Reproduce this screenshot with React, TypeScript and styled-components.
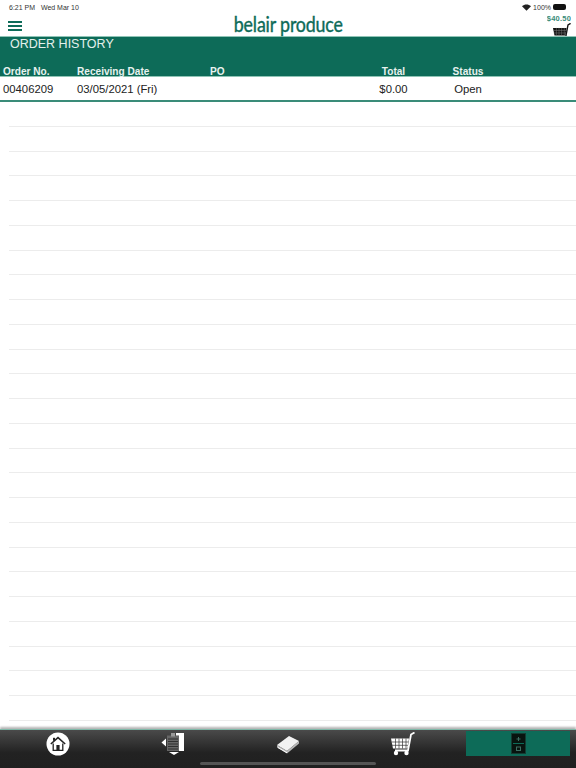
import styled, { createGlobalStyle } from "styled-components";

const GREEN = "#0d6b58";

const GlobalStyle = createGlobalStyle`
  html, body {
    margin: 0;
    padding: 0;
    background: #ffffff;
  }
  #root {
    height: 768px;
  }
`;

const columns = [
  { label: "Order No.", value: "00406209", width: 74 },
  { label: "Receiving Date", value: "03/05/2021 (Fri)", width: 133 },
  { label: "PO", value: "", width: 150 },
  { label: "Total", value: "$0.00", width: 67, center: true },
  { label: "Status", value: "Open", width: 82, center: true },
];

const HomeIcon = () => (
  <svg width="24" height="24" viewBox="0 0 24 24">
    <circle cx="12" cy="12" r="11.5" fill="#fff" />
    <path d="M4.800 12 12 5.600l7.200 6.400" fill="none" stroke="#222" strokeWidth="1.500" />
    <rect x="7" y="5.800" width="2" height="3" fill="#222" />
    <path d="M7.200 11.500v6.800h9.600v-6.800" fill="none" stroke="#222" strokeWidth="1.300" />
    <rect x="10.400" y="13" width="3.200" height="5.300" fill="#222" />
  </svg>
);

const OrdersIcon = () => (
  <svg width="24" height="24" viewBox="0 0 24 24">
    <path d="M0.500 10.500 5 6.500v8z" fill="#fff" />
    <path d="M8 20h10l-5 3z" fill="#fff" />
    <rect x="6" y="3.500" width="12" height="15.500" fill="#666" />
    <rect x="10" y="1" width="4" height="3.500" fill="#999" />
    <path d="M7 7h10M7 9.500h10M7 12h10M7 14.500h10M7 17h10" stroke="#222" strokeWidth="0.800" />
    <path d="M15 1h8v18h-5V3.500h-3z" fill="#fff" />
  </svg>
);

const BookIcon = () => (
  <svg width="24" height="20" viewBox="0 0 24 20">
    <path d="M1 11 13 2l10 5-12 10z" fill="#f2f2f2" />
    <path d="M1 11v2.500l10 6 12-10V7L11 17z" fill="#b9b9b9" />
    <path d="M2 13.500l9 5.300" stroke="#fff" strokeWidth="1" />
  </svg>
);

const CartIcon = ({ color, line, size }: { color: string; line: string; size: number }) => (
  <svg width={size} height={size} viewBox="0 0 24 24">
    <path d="M0 6.500h18l-1.500 10H2z" fill={color} />
    <path
      d="M0.500 10h17.500M1 13.300h16.500M4.500 6.500v10M8 6.500v10M11.500 6.500v10M15 6.500v10"
      stroke={line}
      strokeWidth="0.700"
    />
    <path d="M23.500 0.500 20 2.500l-3 16H4" fill="none" stroke={color} strokeWidth="1.800" />
    <circle cx="5" cy="21" r="2.200" fill={color} />
    <circle cx="15.500" cy="21" r="2.200" fill={color} />
  </svg>
);

const DrawerIcon = () => (
  <svg width="15" height="21" viewBox="0 0 15 21">
    <rect x="0.500" y="0.500" width="14" height="20" fill="#08140f" stroke="#143b32" />
    <rect x="2" y="10" width="11" height="1" fill="#0d6b58" />
    <path d="M5.500 6h4M7.500 4v4" stroke="#3e6f63" strokeWidth="1" />
    <rect x="5.500" y="14" width="4" height="3.500" fill="none" stroke="#3e6f63" />
  </svg>
);

export default function App() {
  const blankRows = Array.from({ length: 25 }, (_, i) => i);

  return (
    <PageStyled>
      <GlobalStyle />
      <TopStyled>
        <StatusBarStyled>
          <StatusTextStyled>6:21 PM&nbsp;&nbsp; Wed Mar 10</StatusTextStyled>
          <StatusRightStyled>
            <svg width="9" height="7" viewBox="0 0 11 8">
              <path d="M0 2.500C3 -0.500 8 -0.500 11 2.500L5.500 8z" fill="#222" />
            </svg>
            <StatusTextStyled>100%</StatusTextStyled>
            <BatteryStyled />
          </StatusRightStyled>
        </StatusBarStyled>
        <BrandRowStyled>
          <BurgerStyled>
            <span />
            <span />
            <span />
          </BurgerStyled>
          <LogoStyled>belair produce</LogoStyled>
          <CartBoxStyled>
            <PriceStyled>$40.50</PriceStyled>
            <CartIcon color="#111111" line="#777777" size={18} />
          </CartBoxStyled>
        </BrandRowStyled>
      </TopStyled>

      <BandStyled>
        <TitleStyled>ORDER HISTORY</TitleStyled>
        <ColumnsStyled>
          {columns.map((c) => (
            <HeadCellStyled key={c.label} $width={c.width} $center={c.center}>
              {c.label}
            </HeadCellStyled>
          ))}
        </ColumnsStyled>
      </BandStyled>

      <OrderRowStyled>
        {columns.map((c) => (
          <ValueCellStyled key={c.label} $width={c.width} $center={c.center}>
            {c.value}
          </ValueCellStyled>
        ))}
      </OrderRowStyled>

      <ListStyled>
        {blankRows.map((i) => (
          <BlankRowStyled key={i} />
        ))}
      </ListStyled>

      <TabBarStyled>
        <TabStyled $width={115}>
          <HomeIcon />
        </TabStyled>
        <TabStyled $width={115}>
          <OrdersIcon />
        </TabStyled>
        <TabStyled $width={115}>
          <BookIcon />
        </TabStyled>
        <TabStyled $width={115}>
          <CartIcon color="#ffffff" line="#333333" size={24} />
        </TabStyled>
        <ActiveTabStyled>
          <DrawerIcon />
        </ActiveTabStyled>
        <HomeIndicatorStyled />
      </TabBarStyled>
    </PageStyled>
  );
}

const PageStyled = styled.div`
  display: flex;
  flex-direction: column;
  width: 576px;
  height: 768px;
  overflow: hidden;
  background: #ffffff;
  font-family: "Liberation Sans", Arial, sans-serif;
`;

const TopStyled = styled.header`
  flex: 0 0 36px;
  height: 36px;
  display: flex;
  flex-direction: column;
`;

const StatusBarStyled = styled.div`
  height: 14px;
  padding: 0 9px 0 9px;
  display: flex;
  align-items: center;
  justify-content: space-between;
`;

const StatusTextStyled = styled.span`
  font-size: 7px;
  color: #333333;
`;

const StatusRightStyled = styled.div`
  display: flex;
  align-items: center;
  gap: 2px;
`;

const BatteryStyled = styled.span`
  width: 13px;
  height: 6px;
  border-radius: 2px;
  background: #111111;
  margin-right: 1px;
`;

const BrandRowStyled = styled.div`
  position: relative;
  height: 22px;
  display: flex;
  align-items: flex-end;
  justify-content: center;
`;

const BurgerStyled = styled.div`
  position: absolute;
  left: 8px;
  top: 7px;
  width: 14px;
  display: flex;
  flex-direction: column;
  gap: 2.500px;
  span {
    display: block;
    height: 1.500px;
    background: ${GREEN};
  }
`;

const LogoStyled = styled.div`
  font-family: "Lato", sans-serif;
  font-size: 22px;
  line-height: 24px;
  letter-spacing: -0.200px;
  color: ${GREEN};
  white-space: nowrap;
  transform: scaleX(0.81);
  -webkit-text-stroke: 0.400px ${GREEN};
  margin-left: 1px;
`;

const CartBoxStyled = styled.div`
  position: absolute;
  right: 5px;
  top: 0;
  height: 22px;
  overflow: hidden;
  display: flex;
  flex-direction: column;
  align-items: flex-end;
  svg {
    flex: none;
  }
`;

const PriceStyled = styled.div`
  font-size: 7.500px;
  font-weight: bold;
  line-height: 9px;
  letter-spacing: 0.200px;
  color: #3a8c79;
`;

const BandStyled = styled.div`
  flex: 0 0 41px;
  height: 41px;
  box-sizing: border-box;
  display: flex;
  flex-direction: column;
  background: ${GREEN};
  border-top: 1px solid #8fc4b6;
  border-bottom: 1px solid #8fc4b6;
`;

const TitleStyled = styled.div`
  padding: 0 0 0 10px;
  font-size: 12.500px;
  line-height: 14px;
  color: #e4f0ec;
`;

const ColumnsStyled = styled.div`
  margin-top: auto;
  margin-bottom: -1px;
  display: flex;
  height: 11px;
  padding-left: 3px;
`;

const HeadCellStyled = styled.div<{ $width: number; $center?: boolean }>`
  width: ${(p) => p.$width}px;
  font-size: 10.100px;
  font-weight: bold;
  line-height: 11px;
  white-space: nowrap;
  color: #e8f2ef;
  text-align: ${(p) => (p.$center ? "center" : "left")};
`;

const OrderRowStyled = styled.div`
  flex: 0 0 23px;
  height: 23px;
  box-sizing: content-box;
  display: flex;
  align-items: center;
  padding-left: 3px;
  border-bottom: 2px solid #3a8c79;
`;

const ValueCellStyled = styled.div<{ $width: number; $center?: boolean }>`
  width: ${(p) => p.$width}px;
  font-size: 11.300px;
  white-space: nowrap;
  color: #222222;
  text-align: ${(p) => (p.$center ? "center" : "left")};
`;

const ListStyled = styled.div`
  flex: 1;
  min-height: 0;
  overflow: hidden;
  padding-left: 9px;
  display: flex;
  flex-direction: column;
`;

const BlankRowStyled = styled.div`
  flex: 0 0 24.750px;
  box-sizing: border-box;
  border-bottom: 1px solid #ececec;
`;

const TabBarStyled = styled.nav`
  position: relative;
  height: 39px;
  flex: 0 0 39px;
  display: flex;
  box-sizing: border-box;
  border-top: 1px solid #7fb8a8;
  background: linear-gradient(#4a4a4a 0%, #333333 35%, #222222 60%, #202020 100%);
  box-shadow: 0 -2px 2px #b5b5b5;
`;

const TabStyled = styled.div<{ $width: number }>`
  width: ${(p) => p.$width}px;
  height: 26px;
  padding-top: 1px;
  display: flex;
  align-items: center;
  justify-content: center;
`;

const ActiveTabStyled = styled.div`
  width: 104px;
  height: 25px;
  margin: 1px 0 0 6px;
  display: flex;
  align-items: center;
  justify-content: center;
  background: ${GREEN};
`;

const HomeIndicatorStyled = styled.span`
  position: absolute;
  left: 200px;
  bottom: 3px;
  width: 176px;
  height: 3px;
  border-radius: 2px;
  background: #555555;
`;
